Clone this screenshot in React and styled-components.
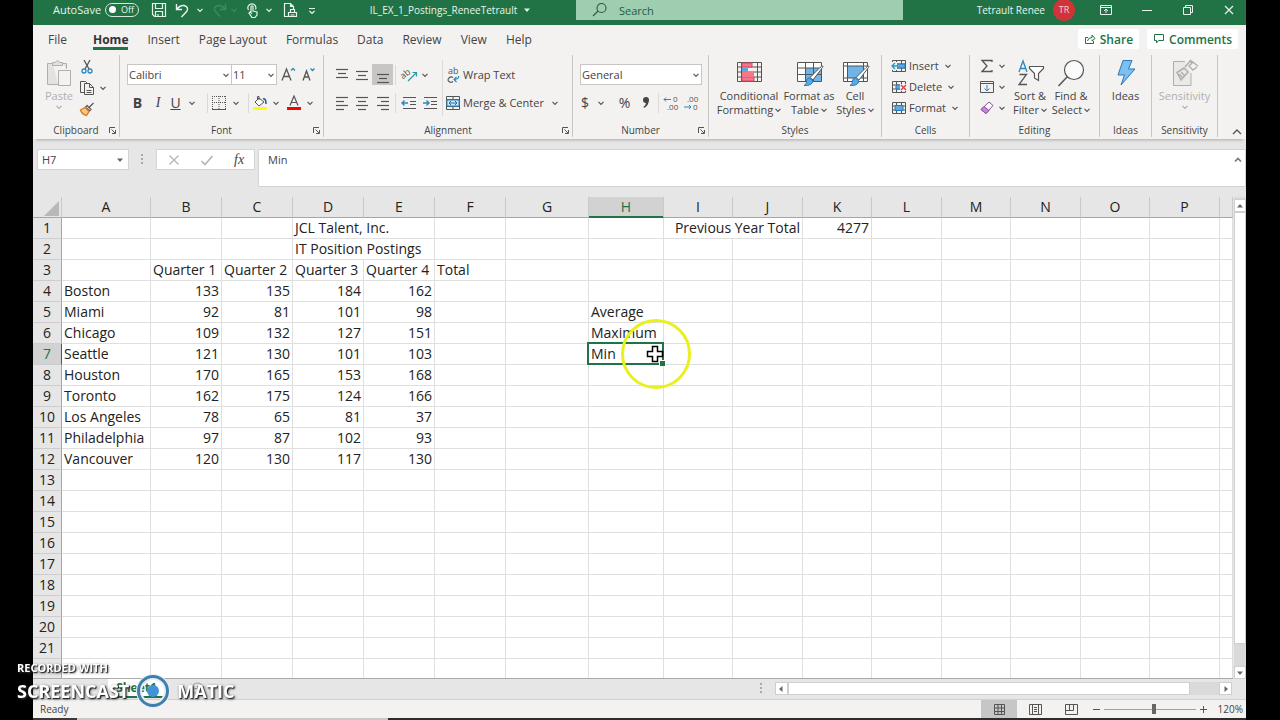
import React from "react";
import styled, { createGlobalStyle, css } from "styled-components";

const GlobalStyle = createGlobalStyle`
  * {
    box-sizing: border-box;
  }

  body {
    margin: 0;
    background: #000;
    font-family: "Open Sans", "Noto Sans", sans-serif;
    color: #444;
  }

  button,
  input,
  select,
  textarea {
    font-family: inherit;
    color: inherit;
  }
`;

const Page = styled.div`
  height: 100vh;
  padding: 0 34px 0 33px;
  overflow: hidden;
`;

const Window = styled.div`
  display: flex;
  flex-direction: column;
  height: 100%;
  background: #e6e6e6;
`;

const PlainButton = styled.button`
  display: flex;
  align-items: center;
  justify-content: center;
  padding: 0;
  border: 0;
  background: none;
  font-size: 11px;
`;

//title bar
const TitleBar = styled.header`
  display: grid;
  grid-template-columns: 543fr 327fr 343fr;
  flex: none;
  height: 25px;
  background: #217346;
  color: #e9f3ed;
  font-size: 11px;
`;

const TitleLeft = styled.div`
  display: flex;
  align-items: center;
  height: 19px;
  padding-left: 20px;
`;

const AutoSave = styled.label`
  display: flex;
  align-items: center;
  gap: 4px;
`;

const Toggle = styled.button`
  display: flex;
  align-items: center;
  gap: 5px;
  width: 34px;
  height: 14px;
  padding: 0 3px;
  border: 1px solid #d5e8dc;
  border-radius: 7px;
  background: none;
  color: #e9f3ed;
  font-size: 9px;
  line-height: 12px;

  &::before {
    content: "";
    width: 7px;
    height: 7px;
    border-radius: 50%;
    background: #fff;
  }
`;

const QuickTools = styled.div`
  display: flex;
  align-items: center;
  gap: 4px;
  margin-left: 11px;
`;

const FileName = styled.h1`
  flex: 1;
  display: flex;
  align-items: center;
  justify-content: center;
  gap: 6px;
  margin: 0;
  padding-left: 5px;
  font-size: 10px;
  font-weight: 400;
  white-space: nowrap;
`;

const SearchBox = styled.label`
  display: flex;
  align-items: center;
  gap: 11px;
  height: 20px;
  padding-left: 16px;
  background: #9fcdb0;
  color: #1f5d3a;
`;

const SearchInput = styled.input`
  flex: 1;
  min-width: 0;
  padding: 0;
  border: 0;
  background: none;
  font-size: 11px;
  outline: 0;

  &::placeholder {
    color: #1f5d3a;
    opacity: 1;
  }
`;

const TitleRight = styled.div`
  display: flex;
  align-items: center;
  justify-content: flex-end;
  height: 19px;
  padding-right: 10px;
  font-size: 10px;
`;

const Avatar = styled.span`
  width: 22px;
  height: 22px;
  margin: 0 24px 0 8px;
  border-radius: 50%;
  background: #d13438;
  color: #f6d5d6;
  font-size: 9px;
  line-height: 22px;
  text-align: center;
`;

const WindowButtons = styled.div`
  display: flex;
  align-items: center;
  gap: 27px;
`;

//tabs
const TabBar = styled.nav`
  display: flex;
  align-items: center;
  justify-content: space-between;
  flex: none;
  height: 28px;
  padding: 0 8px 0 15px;
  background: #f3f2f1;
`;

const Tabs = styled.div`
  display: flex;
  gap: 19px;
`;

const Tab = styled.a`
  height: 22px;
  color: #444;
  font-size: 12px;
  line-height: 23px;
  text-decoration: none;
  border-bottom: 3px solid transparent;

  &:first-child {
    margin-right: 7px;
  }

  ${({ $active }) =>
    $active &&
    css`
      border-color: #217346;
      color: #333;
      font-weight: 700;
    `}
`;

const TabActions = styled.div`
  display: flex;
  gap: 8px;
`;

const ActionButton = styled(PlainButton)`
  gap: 4px;
  height: 20px;
  padding: 0 6px;
  border-radius: 2px;
  background: #fff;
  color: #217346;
  font-size: 12px;
  font-weight: 600;
`;

//ribbon
const Ribbon = styled.section`
  display: flex;
  flex: none;
  height: 86px;
  padding: 2px 0;
  background: #f3f2f1;
  box-shadow: 0 4px 3px -3px #aaa;
`;

const GroupBox = styled.div`
  display: flex;
  flex-direction: column;
  justify-content: space-between;
  flex: ${({ $grow }) => `${$grow} ${$grow} ${$grow}px`};
  border-right: 1px solid #c8c6c4;
`;

const GroupBody = styled.div`
  display: flex;
  justify-content: ${({ $center }) => ($center ? "center" : "flex-start")};
  gap: ${({ $gap }) => $gap || 0}px;
  padding-left: ${({ $pad }) => $pad || 0}px;
  height: 66px;
`;

const GroupFooter = styled.div`
  display: flex;
  align-items: center;
  height: 14px;
  padding-left: ${({ $launcher }) => ($launcher ? 14 : 0)}px;
  font-size: 10px;
  line-height: 16px;
  text-align: center;
  white-space: nowrap;
`;

const GroupLabel = styled.span`
  flex: 1;
`;

const Launcher = styled(PlainButton)`
  width: 14px;
  height: 14px;
`;

const Collapse = styled(PlainButton)`
  flex: 28 28 28px;
  align-items: flex-end;
  padding: 0 0 1px 10px;
`;

const Stack = styled.div`
  display: flex;
  flex-direction: column;
  padding-top: ${({ $top }) => $top || 0}px;
`;

const CommandRow = styled.div`
  display: flex;
  align-items: center;
  height: ${({ $height }) => $height || 21}px;
`;

const FormatRow = styled(CommandRow)`
  height: 21px;
  margin-top: 9px;

  & + & {
    margin-top: 7px;
  }
`;

const IconButton = styled(PlainButton)`
  width: ${({ $width }) => $width || 21}px;
  height: 21px;
  background: ${({ $pressed }) => ($pressed ? "#c8c6c4" : "none")};
`;

const TextButton = styled(PlainButton)`
  gap: 2px;
  height: 21px;
  line-height: 20px;
  white-space: nowrap;
`;

const Letter = styled.span`
  font-size: 14px;
  line-height: 18px;
  font-weight: ${({ $bold }) => ($bold ? 700 : 400)};
  font-style: ${({ $italic }) => ($italic ? "italic" : "normal")};
  font-family: ${({ $italic }) => ($italic ? '"Liberation Serif", serif' : "inherit")};
  text-decoration: ${({ $underline }) => ($underline ? "underline" : "none")};
`;

const Divider = styled.span`
  width: 1px;
  height: ${({ $height }) => $height || 20}px;
  margin: 0 2px;
  background: #dcdad8;
`;

const BigButton = styled(PlainButton)`
  flex-direction: column;
  justify-content: flex-start;
  width: ${({ $width }) => $width}px;
  padding-top: 4px;
  line-height: 14px;
  white-space: nowrap;
  color: ${({ disabled }) => (disabled ? "#b1afad" : "#444")};

  svg {
    flex: none;
  }
`;

const BigLabel = styled.span`
  display: flex;
  align-items: center;
  gap: 2px;
  height: 14px;
`;

const Combo = styled.label`
  display: flex;
  align-items: center;
  position: relative;
  width: ${({ $width }) => $width}px;
  height: 21px;
  border: 1px solid #c8c6c4;
  background: #fff;
  font-size: 11px;

  & + & {
    border-left: 0;
  }

  svg {
    position: absolute;
    right: 0;
    pointer-events: none;
  }
`;

const Select = styled.select`
  width: 100%;
  height: 19px;
  padding: 0 1px;
  border: 0;
  appearance: none;
  background: none;
  font-size: 11px;
`;

//formula bar
const FormulaRow = styled.section`
  display: flex;
  align-items: flex-start;
  flex: none;
  margin: 10px 0 10px;
  height: 38px;
  padding-left: 4px;
  font-size: 11px;
`;

const NameBox = styled.label`
  display: flex;
  align-items: center;
  width: 92px;
  height: 21px;
  padding: 0 4px;
  border: 1px solid #d4d4d4;
  background: #fff;
`;

const NameInput = styled.input`
  flex: 1;
  min-width: 0;
  padding: 0;
  border: 0;
  font-size: 11px;
`;

const Grip = styled.span`
  width: 27px;
  height: 21px;
  padding-top: 5px;
  text-align: center;
  line-height: 0;
`;

const FormulaTools = styled.div`
  display: flex;
  align-items: center;
  justify-content: space-around;
  width: 99px;
  height: 21px;
  border: 1px solid #d4d4d4;
  background: #fff;
`;

const FormulaField = styled.label`
  display: flex;
  flex: 1;
  height: 38px;
  margin-left: 3px;
  border: 1px solid #d4d4d4;
  background: #fff;
`;

const FormulaText = styled.textarea`
  flex: 1;
  height: 36px;
  padding: 2px 9px;
  border: 0;
  resize: none;
  background: none;
  font-size: 11px;
  line-height: 16px;
`;

const FormulaToggle = styled(PlainButton)`
  width: 14px;
  height: 19px;
`;

//worksheet
const SheetArea = styled.main`
  display: flex;
  flex: 1;
  min-height: 0;
`;

const SheetView = styled.div`
  flex: 1;
  min-width: 0;
  overflow: hidden;
  border-bottom: 1px solid #ababab;
`;

const Sheet = styled.table`
  width: 100%;
  table-layout: fixed;
  border-collapse: separate;
  border-spacing: 0;
  background: #fff;
  color: #222;
  font-size: 14px;
  line-height: 20px;
`;

const headCell = css`
  height: 21px;
  padding: 0;
  background: #e6e6e6;
  font-weight: 400;
  text-align: center;
`;

const ColumnHead = styled.th`
  ${headCell}
  border-right: 1px solid #c9c9c9;
  border-bottom: 1px solid #a6a6a6;

  ${({ $active }) =>
    $active &&
    css`
      background: #d2d2d2;
      border-bottom-color: #217346;
      box-shadow: inset 0 -1px #217346;
      color: #217346;
    `}
`;

const Corner = styled.th`
  ${headCell}
  border-right: 1px solid #c9c9c9;
  border-bottom: 1px solid #a6a6a6;

  svg {
    display: block;
    margin: 2px 2px 0 auto;
  }
`;

const RowHead = styled.th`
  ${headCell}
  border-right: 1px solid #a6a6a6;
  border-bottom: 1px solid #cdcdcd;

  ${({ $active }) =>
    $active &&
    css`
      background: #d2d2d2;
      border-right-color: #217346;
      color: #217346;
    `}
`;

const Cell = styled.td`
  position: relative;
  height: 21px;
  padding: 0 2px;
  border-right: 1px solid #dfdfdf;
  border-bottom: 1px solid #dfdfdf;
  text-align: ${({ $right }) => ($right ? "right" : "left")};
  white-space: nowrap;
`;

const Selection = styled.span`
  position: absolute;
  z-index: 1;
  inset: -2px -1px -1px -2px;
  border: 2px solid #217346;

  &::after {
    content: "";
    position: absolute;
    right: -3px;
    bottom: -3px;
    width: 5px;
    height: 5px;
    border: solid #fff;
    border-width: 1px 0 0 1px;
    background: #217346;
  }
`;

const Pointer = styled.svg`
  position: absolute;
  z-index: 2;
  top: -27px;
  right: -30px;
  pointer-events: none;
`;

const VerticalBar = styled.div`
  display: flex;
  flex-direction: column;
  width: 12px;
  margin-left: 1px;
  padding-top: 2px;
  background: #dadada;
`;

const ScrollButton = styled(PlainButton)`
  flex: none;
  width: ${({ $width }) => $width || 12}px;
  height: 13px;
  border: 1px solid #cfcfcf;
  background: #fff;
`;

const VerticalThumb = styled.div`
  flex: 1;
  margin-bottom: 22px;
  border: 1px solid #cfcfcf;
  background: #fff;
`;

const SheetBar = styled.div`
  display: flex;
  align-items: flex-start;
  flex: none;
  height: 21px;
  padding: 0 14px 0 75px;
  border-bottom: 1px solid #d0d0d0;
`;

const SheetTab = styled.button`
  width: 57px;
  height: 19px;
  padding: 0;
  border: 0;
  border-bottom: 2px solid #217346;
  background: #fff;
  color: #217346;
  font-size: 12px;
  font-weight: 700;
  line-height: 15px;
`;

const AddSheet = styled(PlainButton)`
  width: 64px;
  height: 19px;
`;

const HorizontalBar = styled.div`
  display: flex;
  width: 43%;
  height: 13px;
  margin: 3px 0 0 auto;
  background: #dadada;
`;

const BarGrip = styled(Grip)`
  width: 26px;
  height: 13px;
  padding: 1px 0 0;
  background: #e6e6e6;
`;

const HorizontalThumb = styled.div`
  flex: 1;
  margin-right: 29px;
  border: 1px solid #cfcfcf;
  background: #fff;
`;

//status bar
const StatusBar = styled.footer`
  display: flex;
  align-items: center;
  justify-content: space-between;
  flex: none;
  height: 18px;
  padding: 0 3px 0 7px;
  background: #f3f2f1;
  font-size: 10px;
`;

const StatusRight = styled.div`
  display: flex;
  align-items: center;
`;

const ViewButton = styled(PlainButton)`
  width: 36px;
  height: 18px;
  background: ${({ $active }) => ($active ? "#c6c6c6" : "none")};
`;

const ZoomButton = styled(PlainButton)`
  width: 15px;
  height: 18px;
`;

const ZoomSlider = styled.input`
  width: 92px;
  height: 12px;
  margin: 0;
  appearance: none;
  background: linear-gradient(#a0a0a0, #a0a0a0) center / 100% 1px no-repeat;

  &::-webkit-slider-thumb {
    appearance: none;
    width: 4px;
    height: 10px;
    background: #666;
  }
`;

const ZoomValue = styled.span`
  width: 32px;
  text-align: right;
`;

const Taskbar = styled.div`
  flex: none;
  height: 2px;
  background: linear-gradient(90deg, #3a3a3a 0 44px, #cfc6c6 44px 355px, #2c2c2c 355px);
`;

//recorder badge
const Watermark = styled.div`
  position: fixed;
  left: 17px;
  bottom: 12px;
  color: #fff;
  font-weight: 700;
  text-shadow: 1px 1px 1px #222, 1px 1px 3px #333;
`;

const WatermarkTop = styled.div`
  font-size: 11px;
  line-height: 12px;
`;

const WatermarkBrand = styled.div`
  display: flex;
  align-items: center;
  gap: 7px;
  height: 34px;
  font-size: 18px;
`;

const Ink = ({ size = 16, width = size, height = size, box, color = "#555", children, ...rest }) => (
  <svg
    width={width}
    height={height}
    viewBox={box || `0 0 ${width} ${height}`}
    fill="none"
    stroke={color}
    overflow="visible"
    aria-hidden="true"
    {...rest}
  >
    {children}
  </svg>
);

const Chevron = ({ color, width = 14 }) => (
  <Ink width={width} height={8} box={`${-width / 2} -4 ${width} 8`} color={color} strokeWidth="1.2">
    <path d="M-2.5 -1.2 0 1.3 2.5 -1.2" />
  </Ink>
);

const Arrow = ({ turn = 0, color = "#666" }) => (
  <Ink width={8} height={8} box="-4 -4 8 8" color="none">
    <path d="M-3 -1.5H3L0 2Z" fill={color} transform={`rotate(${turn})`} />
  </Ink>
);

const Dots = () => (
  <Ink width={3} height={11} color="none">
    <path d="M0 0h2v2H0zM0 4h2v2H0zM0 8h2v2H0z" fill="#aaa" />
  </Ink>
);

const Lines = ({ rows, top = 3, step = 4 }) => (
  <Ink strokeWidth="1.2">
    {rows.map(([x, w], i) => (
      <path key={i} d={`M${x} ${top + i * step - 0.5}h${w}`} />
    ))}
  </Ink>
);

const Indent = ({ right }) => (
  <Ink strokeWidth="1.2">
    <path d="M2 2.500h13M9 6.500h6M9 9.500h6M2 13.500h13" />
    <path
      stroke="#2b88c0"
      strokeWidth="1.400"
      d={right ? "M1 8h6M4.500 5.500 7 8l-2.500 2.500" : "M7 8H1M3.500 5.500 1 8l2.500 2.500"}
    />
  </Ink>
);

const Brush = () => (
  <>
    <path d="M27.500 8.500 18 21l-3-2.500L25 8.500Q29 5.500 27.500 8.500Z" fill="#fff" stroke="#555" />
    <path d="M14.500 19l3.500 3q-1 5-9 4.500 3-1.500 2.500-4.500 0-3 3-3Z" fill="#5aaae0" stroke="#2b79b8" />
  </>
);

const CellsIcon = ({ kind }) => (
  <Ink width={16} height={14}>
    <path d="M1.5 1.5h13v11h-13zM5.5 1v12M10.5 1v12M1 5h14M1 9h14" />
    {kind === "format" ? (
      <path d="M4 4.500h8v5H4z" fill="#5aaae0" stroke="#2b79b8" />
    ) : (
      <path d="M5 5h9v4H5z" fill="#5aaae0" stroke="#2b79b8" />
    )}
    {kind === "insert" && (
      <>
        <path d="M0 3h6v8H0z" fill="#f3f2f1" stroke="none" />
        <path d="M7 7H1M4 4 1 7l3 3" stroke="#2b9ac0" strokeWidth="1.4" />
      </>
    )}
    {kind === "delete" && (
      <>
        <path d="M9 4h7v7H9z" fill="#f3f2f1" stroke="none" />
        <path d="M10 5l5 5M15 5l-5 5" stroke="#d83b4b" strokeWidth="1.4" />
      </>
    )}
  </Ink>
);

const Group = ({ grow, label, launcher, children, ...body }) => (
  <GroupBox $grow={grow} role="group" aria-label={label}>
    <GroupBody {...body}>{children}</GroupBody>
    <GroupFooter $launcher={launcher}>
      <GroupLabel>{label}</GroupLabel>
      {launcher && (
        <Launcher aria-label={`${label} settings`}>
          <Ink width={9} height={9}>
            <path d="M1.500 7V1.500H7M3.500 3.500 7 7M7.500 4V7.500H4" />
          </Ink>
        </Launcher>
      )}
    </GroupFooter>
  </GroupBox>
);

const tabs = ["File", "Home", "Insert", "Page Layout", "Formulas", "Data", "Review", "View", "Help"];

const columns = [
  ["A", 89],
  ["B", 71],
  ["C", 71],
  ["D", 71],
  ["E", 71],
  ["F", 71],
  ["G", 83],
  ["H", 75],
  ["I", 69],
  ["J", 70],
  ["K", 69],
  ["L", 70],
  ["M", 69],
  ["N", 70],
  ["O", 69],
  ["P", 70],
];

const cells = {
  D1: "JCL Talent, Inc.",
  I1: "Previous Year Total",
  K1: 4277,
  D2: "IT Position Postings",
  B3: "Quarter 1",
  C3: "Quarter 2",
  D3: "Quarter 3",
  E3: "Quarter 4",
  F3: "Total",
  H5: "Average",
  H6: "Maximum",
  H7: "Min",
};

const postings = [
  ["Boston", 133, 135, 184, 162],
  ["Miami", 92, 81, 101, 98],
  ["Chicago", 109, 132, 127, 151],
  ["Seattle", 121, 130, 101, 103],
  ["Houston", 170, 165, 153, 168],
  ["Toronto", 162, 175, 124, 166],
  ["Los Angeles", 78, 65, 81, 37],
  ["Philadelphia", 97, 87, 102, 93],
  ["Vancouver", 120, 130, 117, 130],
];

postings.forEach((row, i) => {
  row.forEach((value, j) => {
    cells["ABCDE"[j] + (i + 4)] = value;
  });
});

//text that runs over into the next column
const spans = { D1: 2, D2: 2, I1: 2 };
const covered = ["E1", "E2", "J1"];
const rowNumbers = Array.from({ length: 22 }, (_, i) => i + 1);
const lastNumbered = 21;

const Header = () => (
  <TitleBar>
    <TitleLeft>
      <AutoSave>
        AutoSave
        <Toggle role="switch" aria-checked="false">
          Off
        </Toggle>
      </AutoSave>
      <QuickTools>
        <PlainButton aria-label="Save">
          <Ink width={18} color="#e9f3ed" strokeWidth="1.2">
            <path d="M2.500 1.500h13v13h-11l-2-2zM5.500 1.500v5h7v-5M5.500 14.500v-5h7v5M8 12v2" />
          </Ink>
        </PlainButton>
        <PlainButton aria-label="Undo">
          <Ink width={20} color="#e9f3ed" strokeWidth="1.4">
            <path d="M4.500 2v5.500H10M4.500 7.500Q8 3 12 3.500 17 5 15 9L9.500 15" />
          </Ink>
          <Chevron color="#e9f3ed" width={16} />
        </PlainButton>
        <PlainButton aria-label="Redo" disabled>
          <Ink width={16} color="#3d8a60" strokeWidth="1.4">
            <path d="M13.500 2v5.500H8M13.500 7.500Q10 3 6 3.500 1 5 3 9L8 14.500" />
          </Ink>
          <Chevron color="#3d8a60" width={12} />
        </PlainButton>
        <PlainButton aria-label="Touch or mouse mode">
          <Ink width={18} color="#e9f3ed" strokeWidth="1.2">
            <path d="M4.500 8A4 4 0 1 1 11.500 7.500M7 10V4.500q1-1.500 2 0V9l4 1v3l-2 2.500H8L5 11l1-1 2 1.500" />
          </Ink>
          <Chevron color="#e9f3ed" />
        </PlainButton>
        <PlainButton aria-label="Print preview">
          <Ink width={20} color="#e9f3ed" strokeWidth="1.2">
            <path d="M8 14.500H4.500v-13h6l3 3V7M10.500 1.500v3h3M8.500 10.500h8v4h-8zM10.500 10V7.500h4V10M10.500 13h4" />
          </Ink>
        </PlainButton>
        <PlainButton aria-label="Customize quick access">
          <Ink width={16} color="#e9f3ed" strokeWidth="1.2">
            <path d="M5 6.500h6M5.500 9 8 11.500 10.500 9" />
          </Ink>
        </PlainButton>
      </QuickTools>
      <FileName>
        IL_EX_1_Postings_ReneeTetrault
        <Arrow color="#e9f3ed" />
      </FileName>
    </TitleLeft>
    <SearchBox>
      <Ink color="#1f5d3a" strokeWidth="1.1">
        <circle cx="9.500" cy="6" r="4.500" />
        <path d="M6 9 1 14" />
      </Ink>
      <SearchInput aria-label="Search" placeholder="Search" />
    </SearchBox>
    <TitleRight>
      Tetrault Renee
      <Avatar>TR</Avatar>
      <WindowButtons>
        <PlainButton aria-label="Ribbon display options">
          <Ink width={14} height={12} color="#e9f3ed">
            <path d="M1.500 1.500h11v9h-11zM1.500 3.500h11M7 9V5M5 7l2-2 2 2" />
          </Ink>
        </PlainButton>
        <PlainButton aria-label="Minimize">
          <Ink width={14} height={12} color="#e9f3ed">
            <path d="M2 6.500h10" />
          </Ink>
        </PlainButton>
        <PlainButton aria-label="Restore">
          <Ink width={14} height={12} color="#e9f3ed">
            <path d="M2.500 3.500h7v7h-7zM4.500 3.500v-2h7v7h-2" />
          </Ink>
        </PlainButton>
        <PlainButton aria-label="Close">
          <Ink width={14} height={12} color="#e9f3ed" strokeWidth="1.2">
            <path d="M3 2l8 8M11 2l-8 8" />
          </Ink>
        </PlainButton>
      </WindowButtons>
    </TitleRight>
  </TitleBar>
);

const MenuTabs = () => (
  <TabBar>
    <Tabs>
      {tabs.map((tab) => (
        <Tab key={tab} href={`#${tab}`} $active={tab === "Home"}>
          {tab}
        </Tab>
      ))}
    </Tabs>
    <TabActions>
      <ActionButton>
        <Ink width={12} height={12} color="#217346">
          <path d="M4 4.500H1.500v6h8V8M3.500 8Q4 4.500 8 4.500V2l3 3.500L8 8V6.500" />
        </Ink>
        Share
      </ActionButton>
      <ActionButton>
        <Ink width={12} height={12} color="#217346">
          <path d="M1.500 1.500h9v6h-5L3.500 10V7.500h-2z" />
        </Ink>
        Comments
      </ActionButton>
    </TabActions>
  </TabBar>
);

const ClipboardGroup = () => (
  <Group grow={87} label="Clipboard" launcher $pad={11} $gap={2}>
    <BigButton $width={30} disabled>
      <Ink width={28} height={30} color="#b1afad">
        <path d="M8 4.500H2.500v21H13M18 4.500h3.500V10M7.500 6.500v-3h3q2-4 4 0h3v3z" fill="#e4e2e0" />
        <path d="M13.500 11.500h12v15h-12z" fill="#f3f2f1" />
      </Ink>
      <BigLabel>Paste</BigLabel>
      <Chevron color="#b1afad" />
    </BigButton>
    <Stack $top={1}>
      <CommandRow>
        <IconButton aria-label="Cut">
          <Ink>
            <path d="M5 1l5 9M11 1 6 10" strokeWidth="1.3" />
            <g stroke="#2b88c0" strokeWidth="1.300">
              <circle cx="5" cy="12" r="2" />
              <circle cx="11" cy="12" r="2" />
            </g>
          </Ink>
        </IconButton>
      </CommandRow>
      <CommandRow>
        <IconButton aria-label="Copy" $width={36}>
          <Ink width={18}>
            <path d="M6 12.500H2.500v-11h5L9 3" />
            <path d="M6.500 3.500h5l4 4v7h-9zM11.500 3.500v4h4M8.500 10.500h5M8.500 12.500h5" />
          </Ink>
          <Chevron />
        </IconButton>
      </CommandRow>
      <CommandRow>
        <IconButton aria-label="Format painter">
          <Ink>
            <path d="M14.500 2l-5 5M8 4.500l4 4-1.500 1.500-4-4z" fill="#f3f2f1" strokeWidth="1.200" />
            <path d="M6 6.500 1.500 9q1 4 6 5.500L10 10.500z" stroke="#e07a20" fill="#f7c793" strokeWidth="1.400" />
          </Ink>
        </IconButton>
      </CommandRow>
    </Stack>
  </Group>
);

const FontGroup = () => (
  <Group grow={204} label="Font" launcher $pad={7}>
    <Stack>
      <FormatRow>
        <Combo $width={105}>
          <Select aria-label="Font family">
            <option>Calibri</option>
          </Select>
          <Chevron width={10} />
        </Combo>
        <Combo $width={45}>
          <Select aria-label="Font size">
            <option>11</option>
          </Select>
          <Chevron width={10} />
        </Combo>
        <IconButton aria-label="Increase font size">
          <Ink>
            <path d="M2 13.500 6.500 2 11 13.500M3.500 9.500h6" strokeWidth="1.300" />
            <path d="M11 3.500l2-2 2 2" stroke="#2b88c0" strokeWidth="1.300" />
          </Ink>
        </IconButton>
        <IconButton aria-label="Decrease font size">
          <Ink>
            <path d="M2 13.500 5.500 4 9 13.500M3.500 10h4.500" strokeWidth="1.300" />
            <path d="M9.500 1.500l2 2 2-2" stroke="#2b88c0" strokeWidth="1.300" />
          </Ink>
        </IconButton>
      </FormatRow>
      <FormatRow>
        <IconButton aria-label="Bold">
          <Letter $bold>B</Letter>
        </IconButton>
        <IconButton aria-label="Italic" $width={20}>
          <Letter $italic>I</Letter>
        </IconButton>
        <IconButton aria-label="Underline" $width={37}>
          <Letter $underline>U</Letter>
          <Chevron width={22} />
        </IconButton>
        <Divider />
        <IconButton aria-label="Borders" $width={36}>
          <Ink strokeDasharray="1 1">
            <path d="M1.500 1v13M14.500 1v13M1 1.500h14M8 1v13M1 7.500h14" />
            <path d="M1 14.500h14" strokeDasharray="none" />
          </Ink>
          <Chevron width={18} />
        </IconButton>
        <Divider />
        <IconButton aria-label="Fill color" $width={34}>
          <Ink>
            <path d="M7 3 3 7l4 4 5-4zM7 5V1.500H5.500V5" fill="#fff" />
            <path d="M11 4q3-1 3 5" stroke="#1f5f9a" strokeWidth="1.500" />
            <path d="M1 12h14v3H1z" fill="#ff0" stroke="none" />
          </Ink>
          <Chevron width={16} />
        </IconButton>
        <IconButton aria-label="Font color" $width={34}>
          <Ink>
            <path d="M4 10.500 8 1l4 9.500M5.500 7.500h5" strokeWidth="1.200" />
            <path d="M1 12h14v3H1z" fill="#f00" stroke="none" />
          </Ink>
          <Chevron width={16} />
        </IconButton>
      </FormatRow>
    </Stack>
  </Group>
);

const AlignmentGroup = () => (
  <Group grow={249} label="Alignment" launcher $pad={7}>
    <Stack>
      <FormatRow>
        <IconButton aria-label="Top align">
          <Lines top={3} rows={[[2, 12], [4, 8], [2, 12]]} />
        </IconButton>
        <IconButton aria-label="Middle align" $width={20}>
          <Lines top={5} rows={[[2, 12], [4, 8], [2, 12]]} />
        </IconButton>
        <IconButton aria-label="Bottom align" $pressed>
          <Lines top={8} rows={[[2, 12], [4, 8], [2, 12]]} />
        </IconButton>
        <Divider />
        <IconButton aria-label="Orientation" $width={38}>
          <Ink>
            <text x="-1" y="9" fontSize="9" fill="#555" stroke="none" transform="rotate(-40 5 8)">
              ab
            </text>
            <path d="M6 14l8-8M10.500 5.500H14.500V9.500" stroke="#2b9aa8" strokeWidth="1.200" />
          </Ink>
          <Chevron />
        </IconButton>
      </FormatRow>
      <FormatRow>
        <IconButton aria-label="Align left">
          <Lines rows={[[2, 12], [2, 8], [2, 12], [2, 8]]} />
        </IconButton>
        <IconButton aria-label="Center" $width={20}>
          <Lines rows={[[2, 12], [4, 8], [2, 12], [4, 8]]} />
        </IconButton>
        <IconButton aria-label="Align right">
          <Lines rows={[[2, 12], [6, 8], [2, 12], [6, 8]]} />
        </IconButton>
        <Divider />
        <IconButton aria-label="Decrease indent">
          <Indent />
        </IconButton>
        <IconButton aria-label="Increase indent">
          <Indent right />
        </IconButton>
      </FormatRow>
    </Stack>
    <CommandRow $height={66}>
      <Divider $height={56} />
    </CommandRow>
    <Stack>
      <FormatRow>
        <TextButton>
          <Ink>
            <text x="3" y="7" fontSize="9" fill="#555" stroke="none">
              ab
            </text>
            <path d="M8 10.500q-2-1.500-4 .5t0 3.500 4 0" strokeWidth="1.100" />
            <path d="M13.500 9q1 3-4 3.500M11.500 10 9 12.500l2.500 2.500" stroke="#2b88c0" strokeWidth="1.200" />
          </Ink>
          Wrap Text
        </TextButton>
      </FormatRow>
      <FormatRow>
        <TextButton>
          <Ink>
            <path d="M1.500 1.500h13v13h-13zM8 1v3M8 12v3M1 4.500h14M1 11.500h14" />
            <path d="M2 5h12v6H2z" fill="#cfe6f7" stroke="#2b88c0" />
            <path d="M4 8h8M6 6 4 8l2 2M10 6l2 2-2 2" stroke="#1f6fa8" />
          </Ink>
          Merge &amp; Center
          <Chevron width={18} />
        </TextButton>
      </FormatRow>
    </Stack>
  </Group>
);

const NumberGroup = () => (
  <Group grow={136} label="Number" launcher $pad={7}>
    <Stack>
      <FormatRow>
        <Combo $width={122}>
          <Select aria-label="Number format">
            <option>General</option>
          </Select>
          <Chevron width={10} />
        </Combo>
      </FormatRow>
      <FormatRow>
        <IconButton aria-label="Accounting format" $width={34}>
          <Letter>$</Letter>
          <Chevron width={24} />
        </IconButton>
        <IconButton aria-label="Percent style">
          <Letter>%</Letter>
        </IconButton>
        <IconButton aria-label="Comma style">
          <Ink width={8} height={14} color="none">
            <path d="M4 1a3 3 0 0 1 3 3q0 5-5 8l-.5-1Q4 9 4 7A3 3 0 1 1 4 1Z" fill="#444" />
          </Ink>
        </IconButton>
        <Divider />
        {["Increase decimal", "Decrease decimal"].map((name, i) => (
          <IconButton key={name} aria-label={name} $width={20}>
            <Ink>
              <text x={i ? 4 : 10} y="7" fontSize="8" fill="#555" stroke="none">
                {i ? ".00" : "0"}
              </text>
              <text x={i ? 10 : 4} y="15" fontSize="8" fill="#555" stroke="none">
                {i ? "0" : ".00"}
              </text>
              <path
                d={i ? "M1 12h7M6 10l2 2-2 2" : "M8 4.500H1M3 2.500l-2 2 2 2"}
                stroke="#2b88c0"
              />
            </Ink>
          </IconButton>
        ))}
      </FormatRow>
    </Stack>
  </Group>
);

const StylesGroup = () => (
  <Group grow={173} label="Styles" $pad={6}>
    <BigButton $width={68}>
      <Ink width={28} height={30}>
        <path d="M2.500 3.500h24v19h-24zM2 8h25M2 13h25M2 18h25M6.500 3v20M22.500 3v20" />
        <path d="M7 4h10v4H7zM7 18h12v4H7z" fill="#f4788a" stroke="#d8475c" />
        <path d="M7 8h6v5H7z" fill="#5aaae0" stroke="none" />
        <path d="M7 13h12v5H7z" fill="#f4788a" stroke="none" />
      </Ink>
      <BigLabel>Conditional</BigLabel>
      <BigLabel>
        Formatting <Chevron width={6} />
      </BigLabel>
    </BigButton>
    <BigButton $width={52}>
      <Ink width={28} height={30}>
        <path d="M2.500 3.500h24v19h-24z" fill="#fff" />
        <path d="M10 9h16v13H10z" fill="#6fb5e8" stroke="none" />
        <path d="M2 9h25M2 15.500h25M10.500 3v20M18.500 3v20" />
        <Brush />
      </Ink>
      <BigLabel>Format as</BigLabel>
      <BigLabel>
        Table <Chevron width={6} />
      </BigLabel>
    </BigButton>
    <BigButton $width={40}>
      <Ink width={28} height={30}>
        <path d="M2.500 3.500h24v19h-24z" fill="#fff" />
        <path d="M6 7h17v12H6z" fill="#6fb5e8" stroke="none" />
        <path d="M2 7h25M2 19h25M6.500 3v20M22.500 3v20" />
        <Brush />
      </Ink>
      <BigLabel>Cell</BigLabel>
      <BigLabel>
        Styles <Chevron width={6} />
      </BigLabel>
    </BigButton>
  </Group>
);

const CellsGroup = () => (
  <Group grow={88} label="Cells" $pad={9}>
    <Stack>
      {["Insert", "Delete", "Format"].map((name) => (
        <CommandRow key={name}>
          <TextButton>
            <CellsIcon kind={name.toLowerCase()} />
            {name}
            <Chevron />
          </TextButton>
        </CommandRow>
      ))}
    </Stack>
  </Group>
);

const EditingGroup = () => (
  <Group grow={130} label="Editing" $pad={9}>
    <Stack>
      <CommandRow>
        <IconButton aria-label="AutoSum" $width={30}>
          <Ink strokeWidth="1.300">
            <path d="M13 4V2.500H3L8 8l-5 5.500h10V12" />
          </Ink>
          <Chevron />
        </IconButton>
      </CommandRow>
      <CommandRow>
        <IconButton aria-label="Fill" $width={30}>
          <Ink>
            <path d="M1.500 2.500h13v11h-13zM1.500 4.500h13" />
            <path d="M8 6v5.500M5.500 9.500 8 12l2.500-2.500" stroke="#2b88c0" />
          </Ink>
          <Chevron />
        </IconButton>
      </CommandRow>
      <CommandRow>
        <IconButton aria-label="Clear" $width={30}>
          <Ink>
            <path d="M10 2l4 3.500-7 8L2 9.500z" fill="#fff" stroke="#8a4a9c" />
            <path d="M5 6.500 10 10.500l-3 3L2 9.500z" fill="#c88ad8" stroke="#8a4a9c" />
          </Ink>
          <Chevron />
        </IconButton>
      </CommandRow>
    </Stack>
    <BigButton $width={42}>
      <Ink width={28} height={30}>
        <path d="M3 13 7 2l4 11M4.500 9.500h5" stroke="#2b88c0" strokeWidth="1.300" />
        <path d="M3.500 15.500h7L3 25.500h8" strokeWidth="1.300" />
        <path d="M13.500 7.500h14v2l-5 5v7l-4-2.500v-4.500l-5-5z" fill="#fff" strokeWidth="1.200" />
      </Ink>
      <BigLabel>Sort &amp;</BigLabel>
      <BigLabel>
        Filter <Chevron width={6} />
      </BigLabel>
    </BigButton>
    <BigButton $width={40}>
      <Ink width={28} height={30} strokeWidth="1.200">
        <circle cx="17" cy="11" r="9.500" fill="#fbfbfb" />
        <path d="M10.500 17.500 1.500 27" strokeWidth="1.500" />
      </Ink>
      <BigLabel>Find &amp;</BigLabel>
      <BigLabel>
        Select <Chevron width={6} />
      </BigLabel>
    </BigButton>
  </Group>
);

const RibbonBar = () => (
  <Ribbon>
    <ClipboardGroup />
    <FontGroup />
    <AlignmentGroup />
    <NumberGroup />
    <StylesGroup />
    <CellsGroup />
    <EditingGroup />
    <Group grow={52} label="Ideas" $center>
      <BigButton $width={44}>
        <Ink width={28} height={30} color="#2b79b8">
          <path d="M11 1.500h9L16.500 10H23L9 26l3.500-10H6z" fill="#7cc0f0" />
        </Ink>
        <BigLabel>Ideas</BigLabel>
      </BigButton>
    </Group>
    <Group grow={66} label="Sensitivity" $center>
      <BigButton $width={60} disabled>
        <Ink width={28} height={30} color="#b1afad">
          <path d="M20 14v12.500H2.500v-24H14" fill="#ebe9e7" />
          <path d="M6 13.500 13 9l4 4-7 8zM8 15l4 4M10 13l4 4M14 8l5-6 2 2-3 3 4 4 4-3M19 1l8 6" strokeWidth="1.500" />
        </Ink>
        <BigLabel>Sensitivity</BigLabel>
        <Chevron color="#b1afad" />
      </BigButton>
    </Group>
    <Collapse aria-label="Collapse ribbon">
      <Ink width={10} height={8} strokeWidth="1.300">
        <path d="M1 6l4-4 4 4" />
      </Ink>
    </Collapse>
  </Ribbon>
);

const FormulaBar = () => (
  <FormulaRow>
    <NameBox>
      <NameInput aria-label="Name box" defaultValue="H7" />
      <Arrow />
    </NameBox>
    <Grip>
      <Dots />
    </Grip>
    <FormulaTools>
      <PlainButton aria-label="Cancel">
        <Ink width={14} height={14} color="#b5b5b5" strokeWidth="1.300">
          <path d="M2.500 2.500l9 9M11.500 2.500l-9 9" />
        </Ink>
      </PlainButton>
      <PlainButton aria-label="Enter">
        <Ink width={14} height={14} color="#b5b5b5" strokeWidth="1.600">
          <path d="M1.500 8 5 11.500 12.500 3" />
        </Ink>
      </PlainButton>
      <PlainButton aria-label="Insert function">
        <Letter $italic>fx</Letter>
      </PlainButton>
    </FormulaTools>
    <FormulaField>
      <FormulaText aria-label="Formula" defaultValue="Min" />
      <FormulaToggle aria-label="Collapse formula bar">
        <Ink width={8} height={8} strokeWidth="1.600" color="#777">
          <path d="M1 5.500l3-3 3 3" />
        </Ink>
      </FormulaToggle>
    </FormulaField>
  </FormulaRow>
);

const SheetCell = ({ id }) => {
  const value = cells[id];
  return (
    <Cell colSpan={spans[id]} $right={typeof value === "number" || id === "I1"}>
      {value}
      {id === "H7" ? (
        <>
          <Selection />
          <Pointer width={74} height={74} viewBox="0 0 74 74" fill="none">
            <circle cx="37" cy="37" r="33.500" stroke="#eaf01c" strokeWidth="3" />
            <path
              d="M33.500 29.500h5v5h5v5h-5v5h-5v-5h-5v-5h5z"
              fill="#fff"
              stroke="#000"
              strokeWidth="1.500"
            />
          </Pointer>
        </>
      ) : null}
    </Cell>
  );
};

const Worksheet = () => (
  <SheetArea>
    <SheetView>
      <Sheet>
        <colgroup>
          <col width={29} />
          {columns.map(([name, width]) => (
            <col key={name} width={width} />
          ))}
          <col />
        </colgroup>
        <thead>
          <tr>
            <Corner aria-label="Select all">
              <Ink width={15} height={15} color="none">
                <path d="M15 0v15H0z" fill="#b8b8b8" />
              </Ink>
            </Corner>
            {columns.map(([name]) => (
              <ColumnHead key={name} scope="col" $active={name === "H"}>
                {name}
              </ColumnHead>
            ))}
            <ColumnHead />
          </tr>
        </thead>
        <tbody>
          {rowNumbers.map((row) => (
            <tr key={row}>
              <RowHead scope="row" $active={row === 7}>
                {row <= lastNumbered ? row : null}
              </RowHead>
              {columns
                .map(([name]) => name + row)
                .filter((id) => !covered.includes(id))
                .map((id) => (
                  <SheetCell key={id} id={id} />
                ))}
              <Cell />
            </tr>
          ))}
        </tbody>
      </Sheet>
    </SheetView>
    <VerticalBar>
      <ScrollButton aria-label="Scroll up">
        <Arrow turn={180} />
      </ScrollButton>
      <VerticalThumb />
      <ScrollButton aria-label="Scroll down">
        <Arrow />
      </ScrollButton>
    </VerticalBar>
  </SheetArea>
);

const Footer = () => (
  <>
    <SheetBar>
      <SheetTab>Sheet1</SheetTab>
      <AddSheet aria-label="New sheet">
        <Ink width={13} height={13} color="#999">
          <circle cx="6.500" cy="6.500" r="5.500" />
          <path d="M6.500 3.500v6M3.500 6.500h6" />
        </Ink>
      </AddSheet>
      <HorizontalBar>
        <BarGrip>
          <Dots />
        </BarGrip>
        <ScrollButton aria-label="Scroll left" $width={13}>
          <Arrow turn={90} />
        </ScrollButton>
        <HorizontalThumb />
        <ScrollButton aria-label="Scroll right" $width={13}>
          <Arrow turn={-90} />
        </ScrollButton>
      </HorizontalBar>
    </SheetBar>
    <StatusBar>
      <span>Ready</span>
      <StatusRight>
        <ViewButton aria-label="Normal view" $active>
          <Ink width={13} height={13}>
            <path d="M1.500 1.500h10v10h-10zM5 1v11M8.500 1v11M1 5h11M1 8.500h11" />
          </Ink>
        </ViewButton>
        <ViewButton aria-label="Page layout view">
          <Ink width={13} height={13}>
            <path d="M.5 1.500h12v10H.5zM3.500 2v9.500M9.500 2v9.500M5 4.500h3M5 6.500h3M5 8.500h3" />
          </Ink>
        </ViewButton>
        <ViewButton aria-label="Page break view">
          <Ink width={13} height={13}>
            <path d="M.5 1.500h12v10H.5zM4.500 1.500v6M8.500 1.500v6M.5 7.500h8" />
          </Ink>
        </ViewButton>
        <ZoomButton aria-label="Zoom out">
          <Ink width={9} height={9}>
            <path d="M1 4.500h7" />
          </Ink>
        </ZoomButton>
        <ZoomSlider type="range" aria-label="Zoom" min="0" max="100" defaultValue="54" />
        <ZoomButton aria-label="Zoom in">
          <Ink width={9} height={9}>
            <path d="M1 4.500h7M4.500 1v7" />
          </Ink>
        </ZoomButton>
        <ZoomValue>120%</ZoomValue>
      </StatusRight>
    </StatusBar>
    <Taskbar />
  </>
);

const Badge = () => (
  <Watermark>
    <WatermarkTop>RECORDED WITH</WatermarkTop>
    <WatermarkBrand>
      SCREENCAST
      <Ink width={34} height={34}>
        <circle cx="17" cy="17" r="14" stroke="#e8eef2" strokeWidth="6" />
        <circle cx="17" cy="17" r="14.500" stroke="#3f7fae" strokeWidth="3" />
        <circle cx="17" cy="17" r="6" fill="#3f93d6" stroke="none" />
      </Ink>
      MATIC
    </WatermarkBrand>
  </Watermark>
);

const App = () => {
  return (
    <>
      <GlobalStyle />
      <Page>
        <Window>
          <Header />
          <MenuTabs />
          <RibbonBar />
          <FormulaBar />
          <Worksheet />
          <Footer />
        </Window>
      </Page>
      <Badge />
    </>
  );
};

export default App;
